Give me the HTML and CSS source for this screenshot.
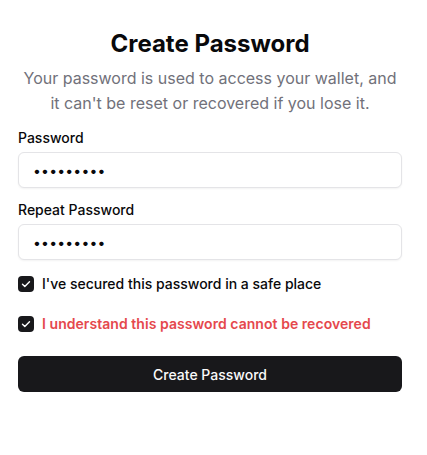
FILE: index.html
```html
<!DOCTYPE html>
<html lang="en">
<head>
<meta charset="utf-8">
<title>Create Password</title>
<link rel="stylesheet" href="styles.css">
</head>
<body>
<main class="card">
  <h1 class="title">Create Password</h1>
  <p class="subtitle">Your password is used to access your wallet, and it can't be reset or recovered if you lose it.</p>
  <div class="fields">
    <label class="field">
      <span class="label">Password</span>
      <input class="input" type="password" value="123456789">
    </label>
    <label class="field">
      <span class="label">Repeat Password</span>
      <input class="input" type="password" value="123456789">
    </label>
  </div>
  <div class="checks">
    <label class="check">
      <span class="box"><svg viewBox="0 0 16 16" width="16" height="16"><path d="M4.5 8.3l2.3 2.2 4.7-4.8" fill="none" stroke="#fff" stroke-width="1.4" stroke-linecap="round" stroke-linejoin="round"/></svg></span>
      <span class="check-text">I've secured this password in a safe place</span>
    </label>
    <label class="check">
      <span class="box"><svg viewBox="0 0 16 16" width="16" height="16"><path d="M4.5 8.3l2.3 2.2 4.7-4.8" fill="none" stroke="#fff" stroke-width="1.4" stroke-linecap="round" stroke-linejoin="round"/></svg></span>
      <span class="check-text danger">I understand this password cannot be recovered</span>
    </label>
  </div>
  <button class="btn" type="button">Create Password</button>
</main>
</body>
</html>
```
FILE: styles.css
```css
* { box-sizing: border-box; }
html, body { margin: 0; background: #fff; }
body {
  font-family: Inter, "Noto Sans", sans-serif;
  color: #09090b;
}
.card {
  width: 384px;
  margin-left: 18px;
  padding-top: 30px;
  display: flex;
  flex-direction: column;
}
.title {
  margin: 0;
  font-size: 24px;
  line-height: 28px;
  font-weight: 700;
  text-align: center;
}
.subtitle {
  margin: 8px 0 0;
  font-size: 16px;
  line-height: 25px;
  color: #71717a;
  text-align: center;
}
.fields {
  margin-top: 12px;
  display: flex;
  flex-direction: column;
  gap: 12px;
}
.field {
  display: flex;
  flex-direction: column;
  gap: 4px;
}
.label {
  font-size: 14px;
  line-height: 20px;
  font-weight: 500;
}
.input {
  height: 36px;
  width: 100%;
  border: 1px solid #e4e4e7;
  border-radius: 6px;
  box-shadow: 0 1px 2px rgba(0,0,0,0.05);
  padding: 0 14px;
  font-family: Inter, sans-serif;
  font-size: 14px;
  color: #09090b;
  background: #fff;
  outline: none;
  letter-spacing: 0.2px;
}
.checks {
  margin-top: 14px;
  display: flex;
  flex-direction: column;
  gap: 20px;
}
.check {
  display: flex;
  align-items: center;
  gap: 8px;
  font-size: 14px;
  line-height: 20px;
}
.box {
  width: 16px;
  height: 16px;
  border-radius: 4px;
  background: #18181b;
  display: flex;
  flex: none;
}
.check-text { font-weight: 500; }
.danger { color: #e5484d; font-weight: 600; letter-spacing: 0.05px; }
.btn {
  margin-top: 22px;
  height: 36px;
  width: 100%;
  border: none;
  border-radius: 6px;
  background: #18181b;
  color: #fafafa;
  font-family: Inter, sans-serif;
  font-size: 14px;
  font-weight: 500;
}
```
